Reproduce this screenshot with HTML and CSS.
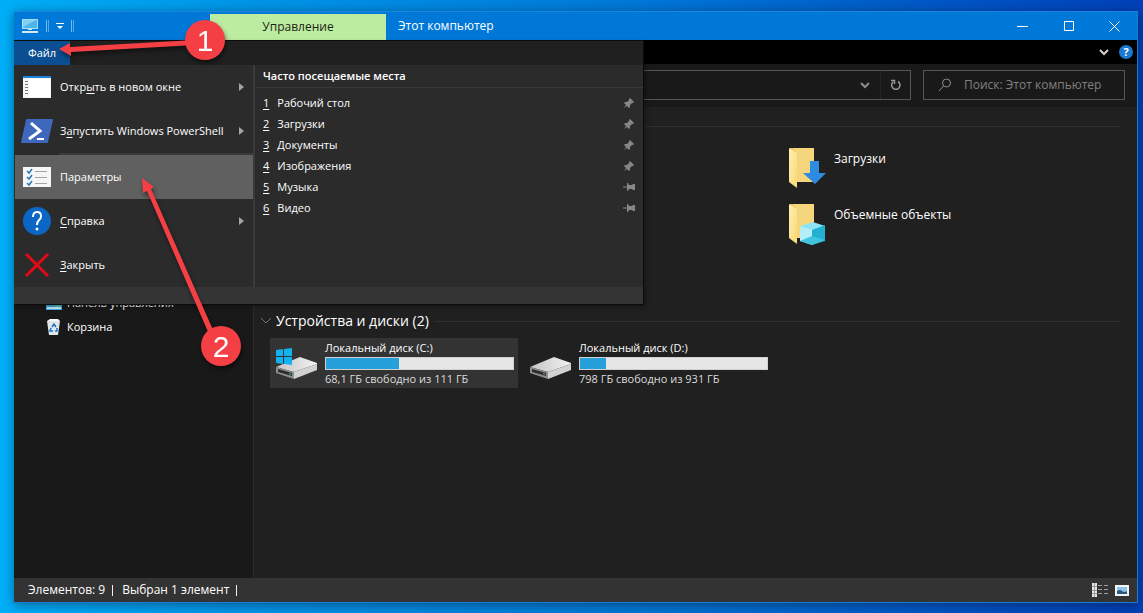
FILE: index.html
```html
<!DOCTYPE html>
<html lang="ru">
<head>
    <meta charset="UTF-8">
    <meta name="viewport" content="width=device-width, initial-scale=1.0">
    <title>Этот компьютер</title>
    <link rel="stylesheet" href="styles.css">
</head>
<body>
    <!-- shared icons -->
    <svg class="defs" width="0" height="0">
        <defs>
            <linearGradient id="folderFront" x1="0" y1="0" x2="1" y2="1">
                <stop offset="0" stop-color="#fff0b4"/>
                <stop offset="1" stop-color="#f8d873"/>
            </linearGradient>
            <linearGradient id="driveTop" x1="0" y1="0" x2="1" y2="0">
                <stop offset="0" stop-color="#c4c4c4"/>
                <stop offset="1" stop-color="#f2f2f2"/>
            </linearGradient>
            <symbol id="pinned" viewBox="0 0 12 12">
                <path fill="#868686" d="M7 1l4 4-1 1-1 0-2 2 0 2-1 1-2-2-3 2 2-3-2-2 1-1 2 0 2-2 0-1z"/>
            </symbol>
            <symbol id="unpinned" viewBox="0 0 12 12">
                <path fill="#868686" d="M0 5.500h4V2h1l1 2h3l1-1h2v6h-2L9 8H6l-1 2H4V6.500H0z"/>
            </symbol>
            <symbol id="folder" viewBox="0 0 40 42">
                <path fill="#edc768" d="M2 1h24v34H10z"/>
                <path fill="#f6d67c" d="M5 1h21v34H9V6z"/>
                <path fill="url(#folderFront)" d="M1 1l8 5v35l-8-6z"/>
            </symbol>
            <symbol id="drive" viewBox="0 0 44 24">
                <path fill="url(#driveTop)" d="M1 11L25 1l17 6v1L19 16z"/>
                <path fill="#8f8f8f" d="M1 11l18 5v7L1 17z"/>
                <path fill="#d2d2d2" d="M19 16l23-8v6l-23 9z"/>
                <path fill="#2c2c2c" d="M3 13l14 4v3L3 16z"/>
                <path fill="#43d05b" d="M14 17l2 1v1l-2-1z"/>
            </symbol>
        </defs>
    </svg>

    <div class="window">
        <header class="titlebar">
            <div class="quick-access">
                <svg width="18" height="16" viewBox="0 0 18 16">
                    <path fill="#a9def8" d="M1 1h16v10H1z"/>
                    <path fill="#4cb5ee" d="M2 2h14v8H2z"/>
                    <path fill="#83d0f7" d="M2 2h13L2 9z"/>
                    <path fill="#d5e9f5" d="M7 11h4v1H7zM1 13h16v2H1z"/>
                </svg>
                <span class="divider"></span>
                <button class="customize" aria-label="Настройка панели">
                    <svg width="8" height="8" viewBox="0 0 8 8"><path fill="#fff" d="M0 1h8v1H0zM1 4h6L4 7z"/></svg>
                </button>
                <span class="divider"></span>
            </div>
            <button class="context-tab">Управление</button>
            <div class="title">Этот компьютер</div>
            <button class="win-btn" aria-label="Свернуть"><svg width="11" height="11"><path stroke="#fff" d="M0 5.500h11"/></svg></button>
            <button class="win-btn" aria-label="Развернуть"><svg width="11" height="11"><path stroke="#fff" fill="none" d="M1.500.5h9v9h-9z"/></svg></button>
            <button class="win-btn" aria-label="Закрыть окно"><svg width="11" height="11"><path stroke="#fff" d="M.5.5l10 10M10.500.5l-10 10"/></svg></button>
        </header>

        <div class="ribbon">
            <button class="ribbon-btn" aria-label="Развернуть ленту">
                <svg width="10" height="8" viewBox="0 0 10 8"><path d="M1 2l4 4 4-4" fill="none" stroke="#d0d0d0" stroke-width="2"/></svg>
            </button>
            <button class="help-btn" aria-label="Помощь">?</button>

            <div class="file-menu">
                <div class="file-head"><button class="file-tab">Файл</button></div>
                <div class="file-body">
                    <nav class="commands">
                        <button class="command">
                            <svg width="28" height="22" viewBox="0 0 28 22">
                                <path fill="#f4f4f4" d="M0 0h28v22H0z"/>
                                <path fill="#1c84dc" d="M0 0h28v2H0z"/>
                                <path fill="#fff" d="M6 3h21v18H6z"/>
                                <path fill="#777" d="M2 5h3v1H2zM2 8h3v1H2zM2 11h3v1H2zM2 14h3v1H2zM2 17h3v1H2z"/>
                            </svg>
                            <span>Откр<u>ы</u>ть в новом окне</span>
                            <i class="more"></i>
                        </button>
                        <button class="command">
                            <svg width="32" height="24" viewBox="0 0 32 24" class="wide">
                                <path fill="#3f68bd" d="M6 0h25q1 0 1 1l-5 22q0 1-1 1H1q-1 0-1-1L5 1q0-1 1-1z"/>
                                <path fill="none" stroke="#fff" stroke-width="3" d="M10 4l9 8-11 8"/>
                                <path stroke="#fff" stroke-width="2" d="M16 20h7"/>
                            </svg>
                            <span>З<u>а</u>пустить Windows PowerShell</span>
                            <i class="more"></i>
                        </button>
                        <hr class="command-line">
                        <button class="command active">
                            <svg width="28" height="20" viewBox="0 0 28 20">
                                <path fill="#f6f6f6" d="M0 0h28v20H0z"/>
                                <path fill="none" stroke="#2478b8" stroke-width="1.500" d="M4 4l2 2 3-4M4 10l2 2 3-4M4 16l2 2 3-4"/>
                                <path stroke="#a4a4a4" d="M12 4.500h12M12 10.500h12M12 16.500h12"/>
                            </svg>
                            <span>Параметры</span>
                        </button>
                        <button class="command">
                            <svg width="28" height="28" viewBox="0 0 28 28">
                                <circle cx="14" cy="14" r="14" fill="#0c66c4"/>
                                <path fill="none" stroke="#fff" stroke-width="2" d="M10 10q0-5 4-5t4 4q0 3-2 4-2 2-2 5"/>
                                <circle cx="14" cy="22" r="1.500" fill="#fff"/>
                            </svg>
                            <span><u>С</u>правка</span>
                            <i class="more"></i>
                        </button>
                        <button class="command">
                            <svg width="28" height="26" viewBox="0 0 28 26"><path stroke="#e00b16" stroke-width="3" d="M3 2l22 22M25 2L3 24"/></svg>
                            <span><u>З</u>акрыть</span>
                        </button>
                    </nav>
                    <section class="places">
                        <h2>Часто посещаемые места</h2>
                        <button class="place"><u>1</u><span>Рабочий стол</span><svg width="12" height="12"><use href="#pinned"/></svg></button>
                        <button class="place"><u>2</u><span>Загрузки</span><svg width="12" height="12"><use href="#pinned"/></svg></button>
                        <button class="place"><u>3</u><span>Документы</span><svg width="12" height="12"><use href="#pinned"/></svg></button>
                        <button class="place"><u>4</u><span>Изображения</span><svg width="12" height="12"><use href="#pinned"/></svg></button>
                        <button class="place"><u>5</u><span>Музыка</span><svg width="12" height="12"><use href="#unpinned"/></svg></button>
                        <button class="place"><u>6</u><span>Видео</span><svg width="12" height="12"><use href="#unpinned"/></svg></button>
                    </section>
                </div>
                <div class="file-foot"></div>
            </div>
        </div>

        <div class="toolbar">
            <div class="address">
                <input type="text" aria-label="Адрес">
                <button aria-label="История"><svg width="10" height="8" viewBox="0 0 10 8"><path d="M1 2l4 4 4-4" fill="none" stroke="#8c8c8c" stroke-width="2"/></svg></button>
                <button class="refresh" aria-label="Обновить">
                    <svg width="12" height="12" viewBox="0 0 12 12">
                        <path fill="none" stroke="#9a9a9a" stroke-width="1.500" d="M3 3a4.200 4.200 0 1 0 5-.5"/>
                        <path fill="none" stroke="#9a9a9a" stroke-width="1.500" d="M1 1.500h3.500V5"/>
                    </svg>
                </button>
            </div>
            <label class="search">
                <svg width="14" height="14" viewBox="0 0 14 14"><circle cx="8.500" cy="5" r="4" fill="none" stroke="#8c8c8c"/><path stroke="#8c8c8c" d="M5.500 8L1 13"/></svg>
                <input type="text" placeholder="Поиск: Этот компьютер" aria-label="Поиск">
            </label>
        </div>

        <div class="main">
            <aside class="sidebar">
                <a class="tree-item" href="#">
                    <svg width="16" height="14" viewBox="0 0 16 14"><path fill="#3aa9e4" d="M0 0h16v14H0z"/><path fill="#c9ecfb" d="M1 11h14v2H1z"/><path fill="#58c48c" d="M9 9h5v2H9z"/></svg>
                    Панель управления
                </a>
                <a class="tree-item" href="#">
                    <svg width="16" height="16" viewBox="0 0 16 16">
                        <path fill="#dfe6ea" d="M1 2h13l-2 14H3z"/>
                        <path fill="#f7f9fa" d="M1 2l3-2h8l2 2z"/>
                        <path fill="none" stroke="#1d74c4" stroke-width="1.500" d="M6 8l2-3 2 3M11 9l0 3H9M7 12H4l1-3"/>
                    </svg>
                    Корзина
                </a>
            </aside>

            <main class="content">
                <section class="group">
                    <h2 class="group-title"></h2>
                    <div class="tiles folders">
                        <a class="tile" href="#">
                            <svg width="40" height="42" viewBox="0 0 40 42">
                                <use href="#folder"/>
                                <path fill="#2e8be2" d="M22 14h9v12h7L27 37 15 26h7z"/>
                            </svg>
                            <span class="tile-name">Загрузки</span>
                        </a>
                        <a class="tile" href="#">
                            <svg width="40" height="42" viewBox="0 0 40 42">
                                <use href="#folder"/>
                                <path fill="#8de4f4" d="M12 23l13-4 12 4-13 5z"/>
                                <path fill="#b4eef6" d="M12 23l12 4v15l-12-4z"/>
                                <path fill="#22b0d2" d="M37 22l-13 5v15l13-4z"/>
                                <path fill="#3fc4de" d="M24 33l13 4-13 5-12-4z"/>
                            </svg>
                            <span class="tile-name">Объемные объекты</span>
                        </a>
                    </div>
                </section>

                <section class="group">
                    <h2 class="group-title">
                        <svg width="10" height="6" viewBox="0 0 10 6"><path d="M0 0l5 5 5-5" fill="none" stroke="#777"/></svg>
                        Устройства и диски (2)
                    </h2>
                    <div class="tiles">
                        <a class="tile drive selected" href="#">
                            <svg width="44" height="34" viewBox="0 0 44 34">
                                <use href="#drive" y="10" width="44" height="24"/>
                                <path fill="#12b3ee" d="M1 4l7-1v7H1zM9 3l8-1v8H9zM1 11h7v7l-7-1zM9 11h8v8l-8-1z"/>
                            </svg>
                            <span class="drive-info">
                                <span>Локальный диск (C:)</span>
                                <span class="usage"><span class="used" style="width: 39%"></span></span>
                                <span class="free">68,1 ГБ свободно из 111 ГБ</span>
                            </span>
                        </a>
                        <a class="tile drive" href="#">
                            <svg width="44" height="34" viewBox="0 0 44 34"><use href="#drive" y="10" width="44" height="24"/></svg>
                            <span class="drive-info">
                                <span>Локальный диск (D:)</span>
                                <span class="usage"><span class="used" style="width: 14%"></span></span>
                                <span class="free">798 ГБ свободно из 931 ГБ</span>
                            </span>
                        </a>
                    </div>
                </section>
            </main>
        </div>

        <footer class="statusbar">
            <span>Элементов: 9</span>
            <span>Выбран 1 элемент</span>
            <div class="views">
                <button aria-label="Таблица">
                    <svg width="16" height="14" viewBox="0 0 16 14">
                        <path fill="#e8e8e8" d="M0 0h5v14H0z"/>
                        <path stroke="#999" d="M0 3.500h5M0 7.500h5M0 10.500h5M2.500 0v14"/>
                        <path stroke="#a0a0a0" stroke-dasharray="4 2" d="M6 2.500h10M6 6.500h10M6 10.500h10"/>
                    </svg>
                </button>
                <button aria-label="Крупные значки">
                    <svg width="14" height="11" viewBox="0 0 14 11">
                        <path fill="#f4f4f4" d="M0 0h14v11H0z"/>
                        <path fill="#8fc3ea" d="M2 2h10v7H2z"/>
                        <path fill="#2d5878" d="M2 6q3-2 5 0t5 0v3H2z"/>
                    </svg>
                </button>
            </div>
        </footer>
    </div>

    <!-- numbered steps over the window -->
    <svg class="steps" width="260" height="380" viewBox="0 0 260 380">
        <g fill="#f43f45">
            <path d="M59 49l11-6v4l125-7v5L71 52v4z"/>
            <path d="M142 178l12 9-3 2 66 150-5 2-65-150-4 2z"/>
            <circle cx="205" cy="40" r="20"/>
            <circle cx="221" cy="346" r="20"/>
        </g>
        <text x="205" y="51">1</text>
        <text x="221" y="357">2</text>
    </svg>
</body>
</html>
```
FILE: styles.css
```css
* {
    box-sizing: border-box;
}
body {
    margin: 0;
    height: 100vh;
    padding: 11px 5px 10px 14px;
    background: linear-gradient(to right, #00aef8, #0096e8 20%, #0078d8 55%, #0040b8);
    color: #fff;
    font-family: "Open Sans", "Noto Sans", sans-serif;
    font-size: 11px;
    line-height: 16px;
    overflow: hidden;
}
button, input {
    margin: 0;
    padding: 0;
    border: none;
    background: none;
    color: inherit;
    font: inherit;
    outline: none;
}
a {
    color: inherit;
    text-decoration: none;
}
h2 {
    margin: 0;
    font-size: 11px;
    font-weight: 600;
}
u {
    text-underline-offset: 2px;
}
svg {
    display: block;
    flex-shrink: 0;
}
.defs {
    position: absolute;
}
.window {
    display: flex;
    flex-direction: column;
    height: 100%;
    border-right: 1px solid #1b7cd6;
    border-bottom: 1px solid #1b7cd6;
    background: #202020;
    box-shadow: 0 2px 10px rgba(0, 0, 0, 0.4);
}

/* title bar */
.titlebar {
    display: flex;
    height: 29px;
    background: #0078d7;
    flex-shrink: 0;
    border-top: 1px solid #1b86de;
}
.quick-access {
    display: flex;
    align-items: center;
    gap: 7px;
    width: 196px;
    padding-left: 7px;
}
.divider {
    width: 3px;
    height: 12px;
    border-left: 1px solid #7cb8ea;
    border-right: 1px solid #5ca4e2;
}
.context-tab {
    width: 176px;
    margin-top: 2px;
    background: #bcec9f;
    color: #1c2418;
}
.title {
    flex: 1;
    padding: 6px 12px;
}
.title, .context-tab, .tile-name, .statusbar {
    font-size: 12px;
}
.win-btn {
    display: flex;
    align-items: center;
    justify-content: center;
    width: 46px;
}

/* ribbon and file menu */
.ribbon {
    position: relative;
    display: flex;
    align-items: center;
    justify-content: flex-end;
    gap: 10px;
    height: 24px;
    padding-right: 4px;
    background: #000;
    flex-shrink: 0;
}
.help-btn {
    width: 14px;
    height: 14px;
    border-radius: 50%;
    background: #1b78d0;
    font-weight: bold;
    line-height: 14px;
}
.file-menu {
    position: absolute;
    top: 0;
    left: 0;
    width: 630px;
    border: 1px solid #0c0c0c;
    border-left: none;
    background: #2b2b2b;
    box-shadow: 2px 2px 4px rgba(0, 0, 0, 0.3);
}
.file-head {
    height: 24px;
    background: #202020;
}
.file-tab {
    width: 56px;
    height: 24px;
    background: #0b4f92;
}
.file-body {
    display: flex;
}
.commands {
    width: 241px;
    padding-left: 1px;
    border-right: 2px solid #3a3a3a;
}
.command {
    display: flex;
    align-items: center;
    gap: 9px;
    width: 100%;
    height: 44px;
    padding: 0 9px 0 8px;
    text-align: left;
    white-space: nowrap;
}
.command span {
    flex: 1;
}
.command.active {
    background: #606060;
}
.wide {
    margin: 0 -2px;
}
.more {
    border: 4px solid transparent;
    border-left: 5px solid #a4a4a4;
    border-right: none;
}
.command-line {
    height: 2px;
    margin: 0 0 0 44px;
    border: none;
    background: #3a3a3a;
}
.places {
    flex: 1;
}
.places h2 {
    margin-bottom: 4px;
    padding: 3px 8px;
    border-bottom: 1px solid #383838;
}
.place {
    display: flex;
    align-items: center;
    gap: 8px;
    width: 100%;
    height: 21px;
    padding: 0 8px;
    text-align: left;
}
.place span {
    flex: 1;
}
.file-foot {
    height: 17px;
    background: #353535;
}

/* address bar and search */
.toolbar {
    display: flex;
    gap: 12px;
    height: 43px;
    padding: 6px 12px 7px;
    background: #191919;
    flex-shrink: 0;
}
.address {
    display: flex;
    flex: 1;
    border: 1px solid #555;
}
.address input {
    flex: 1;
    min-width: 0;
}
.address button {
    display: flex;
    align-items: center;
    justify-content: center;
    width: 30px;
}
.address .refresh {
    border-left: 1px solid #262626;
}
.search {
    display: flex;
    align-items: center;
    gap: 12px;
    width: 202px;
    padding-left: 14px;
    border: 1px solid #555;
}
.search input {
    flex: 1;
    min-width: 0;
    font-size: 12px;
}
.search input::placeholder {
    color: #808080;
    opacity: 1;
}

/* navigation tree and content */
.main {
    display: flex;
    flex: 1;
    min-height: 0;
}
.sidebar {
    width: 240px;
    padding: 184px 0 0 32px;
    border-right: 1px solid #2c2c2c;
    background: #191919;
}
.tree-item {
    display: flex;
    align-items: center;
    gap: 5px;
    height: 24px;
}
.content {
    flex: 1;
    padding: 7px 16px;
}
.group {
    margin-bottom: 4px;
}
.group-title {
    display: flex;
    align-items: center;
    gap: 5px;
    height: 24px;
    margin: 0 0 5px -9px;
    font-size: 14px;
    font-weight: normal;
}
.group-title::after {
    content: "";
    flex: 1;
    height: 1px;
    background: #2e2e2e;
}
.tiles {
    display: grid;
    grid-template-columns: repeat(3, 248px);
    grid-auto-rows: 50px;
    gap: 6px;
}
.folders {
    grid-template-rows: repeat(3, 50px);
}
.folders .tile {
    grid-column: 3;
}
.tile {
    display: flex;
    align-items: center;
    gap: 6px;
    padding: 0 4px 0 10px;
}
.tile-name {
    align-self: flex-start;
    padding-top: 8px;
}
.drive {
    padding-left: 5px;
}
.selected {
    background: #333;
}
.drive-info {
    display: flex;
    flex-direction: column;
    flex: 1;
    gap: 1px;
}
.usage {
    display: block;
    height: 13px;
    border: 1px solid #d0d0d0;
    background: #e6e6e6;
}
.used {
    display: block;
    height: 100%;
    background: #26a0da;
}
.free {
    color: #dcdcdc;
}

/* status bar */
.statusbar {
    display: flex;
    align-items: center;
    gap: 9px;
    height: 24px;
    padding: 0 8px 0 14px;
    background: #333;
    flex-shrink: 0;
}
.statusbar span {
    display: flex;
    align-items: center;
    gap: 7px;
}
.statusbar span::after {
    content: "";
    width: 1px;
    height: 11px;
    background: #f0f0f0;
}
.views {
    display: flex;
    align-items: center;
    gap: 7px;
    margin-left: auto;
}

.steps {
    position: absolute;
    top: 0;
    left: 0;
    pointer-events: none;
    filter: drop-shadow(1px 3px 2px rgba(0, 0, 0, 0.5));
}
.steps text {
    fill: #fff;
    font-family: "Liberation Sans", sans-serif;
    font-size: 30px;
    text-anchor: middle;
}
```
